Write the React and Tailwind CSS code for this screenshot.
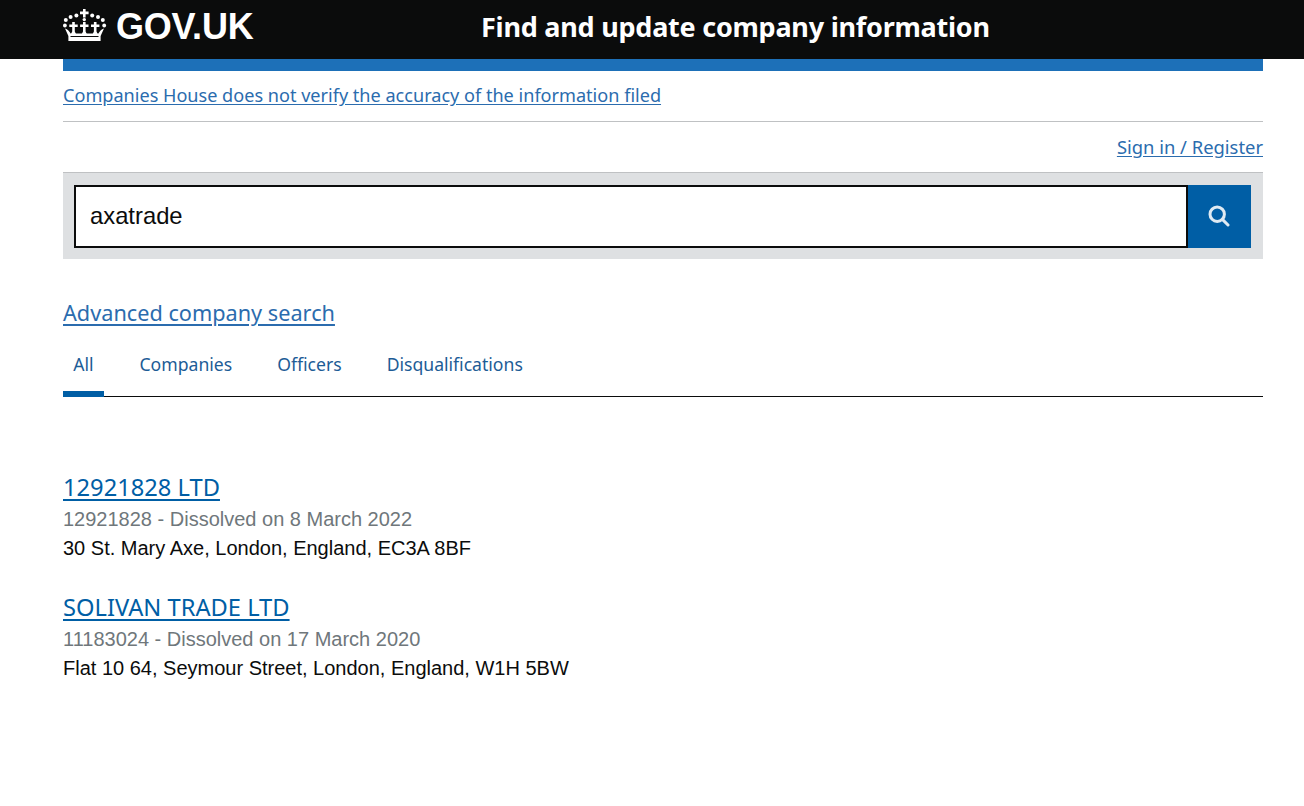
const nta = { fontFamily: '"Noto Sans", sans-serif' };
const arial = { fontFamily: '"Liberation Sans", Arial, sans-serif' };

function Fleur({ x, y }) {
  return (
    <path d={`M${x - 1.3} ${y - 4.5}h2.6v2.5h2.9v2.6h-2.9v4.4l1.2 2.5h-5l1.2-2.5V${y + 0.6}h-2.9V${y - 2}h2.9z`} />
  );
}

function Crown() {
  return (
    <svg width="44" height="32" viewBox="0 0 44 32" fill="#fff" className="shrink-0 -mt-[3px]">
      <path d="M20 0h2.6v2.4h3v2.8h-3v3.4h-2.6V5.2h-3V2.4h3z" />
      <circle cx="21.3" cy="10.6" r="1.7" />
      <circle cx="13.4" cy="6.6" r="2" /><circle cx="29.2" cy="6.6" r="2" />
      <circle cx="7.6" cy="8" r="2" /><circle cx="35" cy="8" r="2" />
      <circle cx="2.8" cy="11" r="2" /><circle cx="39.8" cy="11" r="2" />
      <circle cx="1.9" cy="16.5" r="1.9" /><circle cx="41.2" cy="16.5" r="1.9" />
      <Fleur x={10.5} y={17.5} /><Fleur x={21.3} y={17.5} /><Fleur x={32.2} y={17.5} />
      <path d="M2 19.5c1.8.6 3.4 1.6 4.6 3.4l1 1.5h27.8l1-1.5c1.2-1.8 2.8-2.8 4.6-3.4l-3.4 7.4V32H5.4v-5.1z" />
      <path d="M7.5 27h28v1H7.5z" fill="#0b0c0c" />
    </svg>
  );
}

function Result({ title, meta, address, className }) {
  return (
    <div className={className}>
      <a href="#" style={nta} className="block text-[23.7px] leading-[30px] text-[#005ea5] underline underline-offset-[3px] w-fit">{title}</a>
      <p style={arial} className="mt-[3px] text-[20px] leading-[29px] text-[#6f777b]">{meta}</p>
      <p style={arial} className="text-[20px] leading-[29px] text-[#0b0c0c]">{address}</p>
    </div>
  );
}

export default function App() {
  return (
    <div className="min-h-[806px] bg-white" style={arial}>
      <header className="h-[59px] bg-[#0b0c0c] px-[63px] flex items-center">
        <div className="flex items-center gap-[9px] w-[419px] -mt-[6px]">
          <Crown />
          <span className="text-white font-bold text-[36px] leading-none tracking-[-0.2px]">GOV.UK</span>
        </div>
        <span style={nta} className="text-white font-bold text-[27px] leading-none tracking-[-0.24px] -mt-[6px] -ml-[1px]">Find and update company information</span>
      </header>
      <main className="mx-[63px] w-[1200px]" style={nta}>
        <div className="h-[12px] bg-[#1d70b8]" />
        <div className="h-[51px] border-b border-[#bfc1c3] pt-[11px]">
          <a href="#" className="text-[18.1px] leading-[26px] text-[#2b6cae] underline underline-offset-2">Companies House does not verify the accuracy of the information filed</a>
        </div>
        <div className="flex justify-end h-[50px] pt-[12px]">
          <a href="#" className="text-[18.4px] leading-[26px] text-[#2b6cae] underline underline-offset-2">Sign in / Register</a>
        </div>
        <div className="h-[87px] bg-[#dee0e2] border-t border-[#bfc1c3] pl-[11px] pt-[12px] flex">
          <div style={arial} className="w-[1114px] h-[63px] border-[2.5px] border-[#0b0c0c] bg-white flex items-center pl-[14px] pb-[2px] text-[23.8px] text-[#0b0c0c]">axatrade</div>
          <button className="w-[63px] h-[63px] bg-[#005ea5] flex items-center justify-center">
            <svg width="22" height="22" viewBox="0 0 22 22" fill="none" stroke="#dfeaf3" strokeWidth="3" className="-ml-[2px] -mt-[2px]">
              <circle cx="9.2" cy="9.2" r="7.2" />
              <path d="M14.4 14.4l5.6 5.6" strokeLinecap="round" />
            </svg>
          </button>
        </div>
        <div className="mt-[39px]">
          <a href="#" className="text-[21.7px] leading-[30px] text-[#2b6cae] underline underline-offset-[3px]">Advanced company search</a>
        </div>
        <nav className="mt-[19px] h-[50px] border-b border-[#0b0c0c] flex text-[#1d5c96] text-[17.6px]">
          <a href="#" className="w-[41px] h-[50px] border-b-[6px] border-[#005ea5] text-center pt-[4px] leading-[26px]">All</a>
          <a href="#" className="ml-[35.5px] pt-[4px] leading-[26px]">Companies</a>
          <a href="#" className="ml-[45px] pt-[4px] leading-[26px]">Officers</a>
          <a href="#" className="ml-[45px] pt-[4px] leading-[26px]">Disqualifications</a>
        </nav>
        <Result className="mt-[75px]" title="12921828 LTD" meta="12921828 - Dissolved on 8 March 2022" address="30 St. Mary Axe, London, England, EC3A 8BF" />
        <Result className="mt-[29px]" title="SOLIVAN TRADE LTD" meta="11183024 - Dissolved on 17 March 2020" address="Flat 10 64, Seymour Street, London, England, W1H 5BW" />
      </main>
    </div>
  );
}
